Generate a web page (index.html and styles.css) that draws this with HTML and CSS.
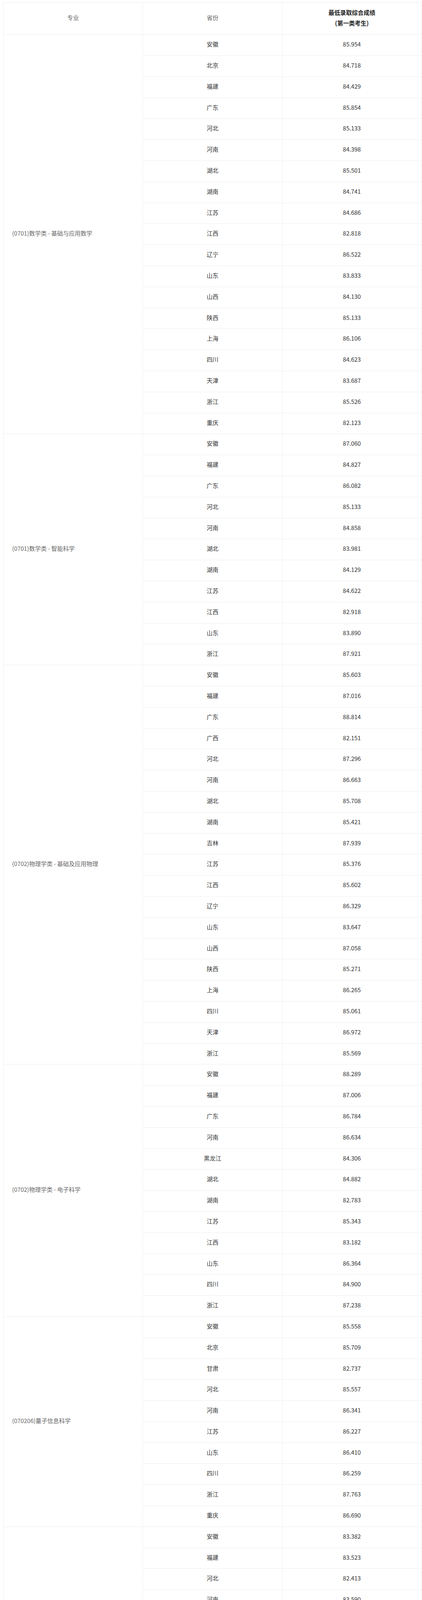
FILE: index.html
```html
<!DOCTYPE html>
<html lang="zh-CN">
<head>
<meta charset="utf-8">
<title>录取成绩</title>
<link rel="stylesheet" href="styles.css">
</head>
<body>
<div class="page">
<table class="score-table">
<colgroup><col class="col-major"><col class="col-prov"><col class="col-score"></colgroup>
<thead>
<tr><th class="th-light">专业</th><th class="th-light">省份</th><th class="th-strong">最低录取综合成绩<br>(第一类考生)</th></tr>
</thead>
<tbody>
<tr><td class="major" rowspan="19">(0701)数学类 - 基础与应用数学</td><td>安徽</td><td class="num">85.954</td></tr>
<tr><td>北京</td><td class="num">84.718</td></tr>
<tr><td>福建</td><td class="num">84.429</td></tr>
<tr><td>广东</td><td class="num">85.854</td></tr>
<tr><td>河北</td><td class="num">85.133</td></tr>
<tr><td>河南</td><td class="num">84.398</td></tr>
<tr><td>湖北</td><td class="num">85.501</td></tr>
<tr><td>湖南</td><td class="num">84.741</td></tr>
<tr><td>江苏</td><td class="num">84.686</td></tr>
<tr><td>江西</td><td class="num">82.818</td></tr>
<tr><td>辽宁</td><td class="num">86.522</td></tr>
<tr><td>山东</td><td class="num">83.833</td></tr>
<tr><td>山西</td><td class="num">84.130</td></tr>
<tr><td>陕西</td><td class="num">85.133</td></tr>
<tr><td>上海</td><td class="num">86.106</td></tr>
<tr><td>四川</td><td class="num">84.623</td></tr>
<tr><td>天津</td><td class="num">83.687</td></tr>
<tr><td>浙江</td><td class="num">85.526</td></tr>
<tr><td>重庆</td><td class="num">82.123</td></tr>

<tr><td class="major" rowspan="11">(0701)数学类 - 智能科学</td><td>安徽</td><td class="num">87.060</td></tr>
<tr><td>福建</td><td class="num">84.827</td></tr>
<tr><td>广东</td><td class="num">86.082</td></tr>
<tr><td>河北</td><td class="num">85.133</td></tr>
<tr><td>河南</td><td class="num">84.858</td></tr>
<tr><td>湖北</td><td class="num">83.981</td></tr>
<tr><td>湖南</td><td class="num">84.129</td></tr>
<tr><td>江苏</td><td class="num">84.622</td></tr>
<tr><td>江西</td><td class="num">82.918</td></tr>
<tr><td>山东</td><td class="num">83.890</td></tr>
<tr><td>浙江</td><td class="num">87.921</td></tr>

<tr><td class="major" rowspan="19">(0702)物理学类 - 基础及应用物理</td><td>安徽</td><td class="num">85.603</td></tr>
<tr><td>福建</td><td class="num">87.016</td></tr>
<tr><td>广东</td><td class="num">88.814</td></tr>
<tr><td>广西</td><td class="num">82.151</td></tr>
<tr><td>河北</td><td class="num">87.296</td></tr>
<tr><td>河南</td><td class="num">86.663</td></tr>
<tr><td>湖北</td><td class="num">85.708</td></tr>
<tr><td>湖南</td><td class="num">85.421</td></tr>
<tr><td>吉林</td><td class="num">87.939</td></tr>
<tr><td>江苏</td><td class="num">85.376</td></tr>
<tr><td>江西</td><td class="num">85.602</td></tr>
<tr><td>辽宁</td><td class="num">86.329</td></tr>
<tr><td>山东</td><td class="num">83.647</td></tr>
<tr><td>山西</td><td class="num">87.058</td></tr>
<tr><td>陕西</td><td class="num">85.271</td></tr>
<tr><td>上海</td><td class="num">86.265</td></tr>
<tr><td>四川</td><td class="num">85.061</td></tr>
<tr><td>天津</td><td class="num">86.972</td></tr>
<tr><td>浙江</td><td class="num">85.569</td></tr>

<tr><td class="major" rowspan="12">(0702)物理学类 - 电子科学</td><td>安徽</td><td class="num">88.289</td></tr>
<tr><td>福建</td><td class="num">87.006</td></tr>
<tr><td>广东</td><td class="num">86.784</td></tr>
<tr><td>河南</td><td class="num">86.634</td></tr>
<tr><td>黑龙江</td><td class="num">84.306</td></tr>
<tr><td>湖北</td><td class="num">84.882</td></tr>
<tr><td>湖南</td><td class="num">82.783</td></tr>
<tr><td>江苏</td><td class="num">85.343</td></tr>
<tr><td>江西</td><td class="num">83.182</td></tr>
<tr><td>山东</td><td class="num">86.364</td></tr>
<tr><td>四川</td><td class="num">84.900</td></tr>
<tr><td>浙江</td><td class="num">87.238</td></tr>

<tr><td class="major" rowspan="10">(070206)量子信息科学</td><td>安徽</td><td class="num">85.558</td></tr>
<tr><td>北京</td><td class="num">85.709</td></tr>
<tr><td>甘肃</td><td class="num">82.737</td></tr>
<tr><td>河北</td><td class="num">85.557</td></tr>
<tr><td>河南</td><td class="num">86.341</td></tr>
<tr><td>江苏</td><td class="num">86.227</td></tr>
<tr><td>山东</td><td class="num">86.410</td></tr>
<tr><td>四川</td><td class="num">86.259</td></tr>
<tr><td>浙江</td><td class="num">87.763</td></tr>
<tr><td>重庆</td><td class="num">86.690</td></tr>

<tr><td class="major major-raised" rowspan="17">(0703)化学类</td><td>安徽</td><td class="num">83.382</td></tr>
<tr><td>福建</td><td class="num">83.523</td></tr>
<tr><td>河北</td><td class="num">82.413</td></tr>
<tr><td>河南</td><td class="num">83.590</td></tr>
<tr><td>湖北</td><td class="num">81.749</td></tr>
<tr><td>湖南</td><td class="num">80.363</td></tr>
<tr><td>吉林</td><td class="num">82.984</td></tr>
<tr><td>江苏</td><td class="num">82.946</td></tr>
<tr><td>江西</td><td class="num">81.193</td></tr>
<tr><td>辽宁</td><td class="num">83.218</td></tr>
<tr><td>内蒙古</td><td class="num">80.908</td></tr>
<tr><td>山东</td><td class="num">82.003</td></tr>
<tr><td>山西</td><td class="num">83.691</td></tr>
<tr><td>陕西</td><td class="num">83.640</td></tr>
<tr><td>四川</td><td class="num">82.776</td></tr>
<tr><td>浙江</td><td class="num">83.288</td></tr>
<tr><td>重庆</td><td class="num">84.574</td></tr>

<tr><td class="major" rowspan="23">(0710)生物科学类</td><td>安徽</td><td class="num">83.383</td></tr>
<tr><td>福建</td><td class="num">84.056</td></tr>
<tr><td>广东</td><td class="num">85.410</td></tr>
<tr><td>河北</td><td class="num">83.131</td></tr>
<tr><td>河南</td><td class="num">83.699</td></tr>
<tr><td>湖北</td><td class="num">81.687</td></tr>
<tr><td>广东</td><td class="num">83.533</td></tr>
<tr><td>海南</td><td class="num">84.178</td></tr>
<tr><td>河北</td><td class="num">82.379</td></tr>
<tr><td>河南</td><td class="num">83.868</td></tr>
<tr><td>湖北</td><td class="num">81.486</td></tr>
<tr><td>湖南</td><td class="num">80.537</td></tr>
<tr><td>江苏</td><td class="num">83.573</td></tr>
<tr><td>江西</td><td class="num">80.803</td></tr>
<tr><td>广东</td><td class="num">84.334</td></tr>
<tr><td>河北</td><td class="num">84.641</td></tr>
<tr><td>河南</td><td class="num">84.757</td></tr>
<tr><td>湖北</td><td class="num">82.506</td></tr>
<tr><td>山西</td><td class="num">84.737</td></tr>
<tr><td>陕西</td><td class="num">84.630</td></tr>
<tr><td>四川</td><td class="num">83.301</td></tr>
<tr><td>云南</td><td class="num">84.301</td></tr>
<tr><td>浙江</td><td class="num">84.801</td></tr>
</tbody>
</table>
<div class="notice">
<p>考生可登录中国科学技术大学强基计划报名平台（网址：https://bm.chsi.com.cn/jcxkzs/sch/10358）查询本人成绩及录取结果。</p>
<p>特此通知！</p>
</div>
</div>
</body>
</html>
```
FILE: styles.css
```css
* {
  box-sizing: border-box;
}

html,
body {
  background: #ffffff;
}

body {
  margin: 0;
  font-family: "Noto Sans CJK SC", "Noto Sans", sans-serif;
  color: #333333;
}

.page {
  padding: 6px 2px 0 8px;
}

.score-table {
  width: 1070px;
  border-collapse: collapse;
  table-layout: fixed;
  font-size: 15px;
}

.col-major,
.col-prov {
  width: 357px;
}

.col-score {
  width: 356px;
}

.score-table th,
.score-table td {
  border: 1px solid #eeeeee;
  text-align: center;
  vertical-align: middle;
  line-height: 27px;
  padding: 10px 0 15.8px;
  font-weight: normal;
  color: #333333;
}

.score-table th {
  padding: 10.5px 0 16.8px;
}

.score-table .th-light {
  color: #666666;
}

.score-table .th-strong {
  color: #222222;
  font-weight: bold;
}

.score-table td.num {
  font-variant-numeric: tabular-nums;
}

.score-table td.major {
  text-align: left;
  padding-left: 22px;
  padding-right: 10px;
  color: #666666;
}

.score-table td.major-raised {
  padding-bottom: 128px;
}

.notice {
  padding: 11px 0 0 37px;
  color: #666666;
  font-size: 17px;
  white-space: nowrap;
}

.notice p {
  margin: 0;
  line-height: 33px;
}
```
